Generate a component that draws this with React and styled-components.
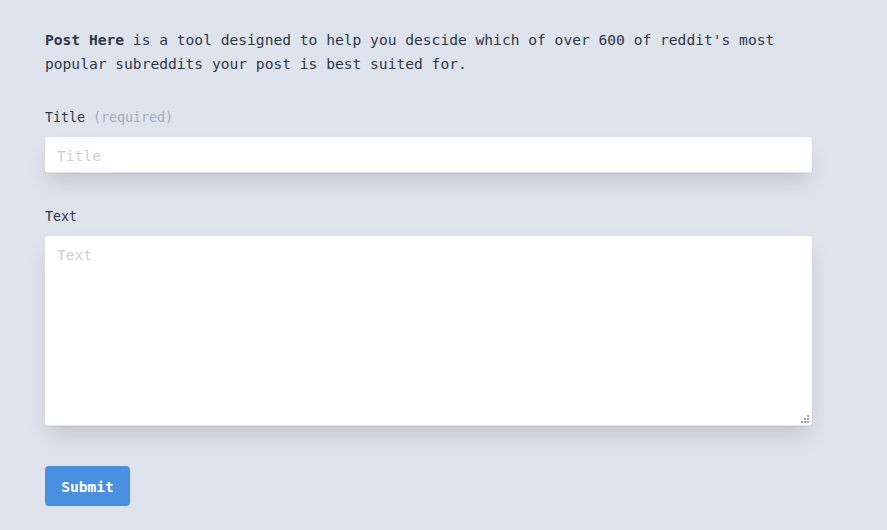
import React from "react";
import styled, { createGlobalStyle } from "styled-components";

const Global = createGlobalStyle`
  html, body { margin: 0; padding: 0; background: #dfe3ec; }
  body { font-family: "DejaVu Sans Mono", monospace; color: #2d3748; }
`;

const Page = styled.main`
  padding: 28px 75px 24px 45px;
  width: 767px;
`;

const Intro = styled.p`
  margin: 0 0 32px;
  font-size: 14.6px;
  line-height: 24px;
  strong { font-weight: bold; }
`;

const Field = styled.div`
  display: flex;
  flex-direction: column;
  margin-bottom: ${(p) => p.$gap}px;
`;

const Label = styled.label`
  font-size: 13.3px;
  line-height: 20px;
  color: #2d3748;
  margin-bottom: 9px;
`;

const Hint = styled.span`
  color: #a0aec0;
`;

const inputBase = `
  box-sizing: border-box;
  width: 100%;
  border: none;
  border-bottom: 1px solid #e3e5ea;
  border-radius: 3px;
  background: #fff;
  font-family: "DejaVu Sans Mono", monospace;
  font-size: 14.6px;
  color: #2d3748;
  box-shadow: 0 1px 2px rgba(0,0,0,0.06), 0 12px 22px -4px rgba(0,0,0,0.14);
  outline: none;
  &::placeholder { color: #ccd0de; }
`;

const Input = styled.input`
  ${inputBase}
  height: 36px;
  padding: 10px 12px 8px;
`;

const AreaWrap = styled.div`
  position: relative;
`;

const TextArea = styled.textarea`
  ${inputBase}
  height: 190px;
  padding: 10px 12px;
  line-height: 18px;
  resize: none;
  display: block;
`;

const Grip = styled.svg`
  position: absolute;
  right: 3px;
  bottom: 3px;
  pointer-events: none;
`;

const Button = styled.button`
  width: 85px;
  height: 40px;
  border: none;
  border-radius: 4px;
  background: #4a90e0;
  color: #fff;
  font-family: "DejaVu Sans Mono", monospace;
  font-weight: bold;
  font-size: 14.6px;
  cursor: pointer;
`;

export default function App() {
  return (
    <>
      <Global />
      <Page>
        <Intro>
          <strong>Post Here</strong> is a tool designed to help you descide which of over 600 of reddit's most popular subreddits your post is best suited for.
        </Intro>
        <Field $gap={34}>
          <Label>Title <Hint>(required)</Hint></Label>
          <Input placeholder="Title" />
        </Field>
        <Field $gap={40}>
          <Label>Text</Label>
          <AreaWrap>
            <TextArea placeholder="Text" />
            <Grip width="8" height="8" viewBox="0 0 8 8" fill="#a8a8a8">
              <rect x="6" y="0" width="2" height="2" />
              <rect x="3" y="3" width="2" height="2" />
              <rect x="6" y="3" width="2" height="2" />
              <rect x="0" y="6" width="2" height="2" />
              <rect x="3" y="6" width="2" height="2" />
              <rect x="6" y="6" width="2" height="2" />
            </Grip>
          </AreaWrap>
        </Field>
        <Button>Submit</Button>
      </Page>
    </>
  );
}
